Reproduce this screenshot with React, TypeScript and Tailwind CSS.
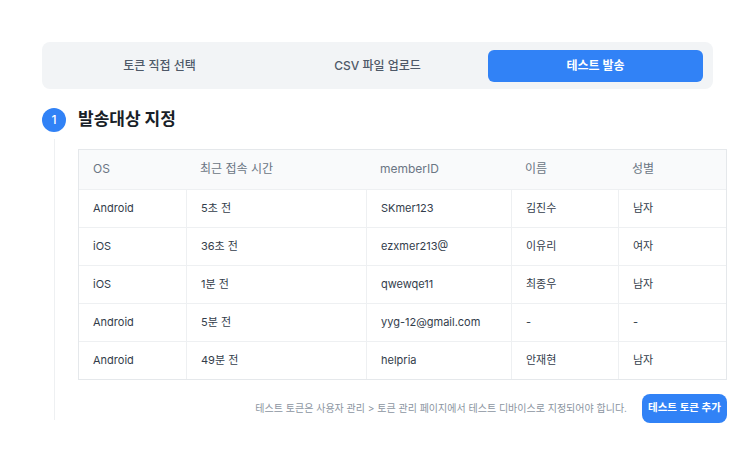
import React from 'react';

const rows = [
  ['Android', '5초 전', 'SKmer123', '김진수', '남자'],
  ['iOS', '36초 전', 'ezxmer213@', '이유리', '여자'],
  ['iOS', '1분 전', 'qwewqe11', '최종우', '남자'],
  ['Android', '5분 전', 'yyg-12@gmail.com', '-', '-'],
  ['Android', '49분 전', 'helpria', '안재현', '남자'],
];

const headers = ['OS', '최근 접속 시간', 'memberID', '이름', '성별'];
const widths = ['w-[107px] shrink-0', 'w-[180px] shrink-0', 'w-[145px] shrink-0', 'w-[107px] shrink-0', 'flex-1'];

export default function App(): React.ReactNode {
  return (
    <div
      className="h-[456px] w-[756px] bg-white pt-[42px]"
      style={{ fontFamily: 'Inter, "Noto Sans CJK KR", sans-serif' }}
    >
      <div className="ml-[42px] flex h-[47px] w-[671px] items-center gap-[3px] rounded-lg bg-[#f2f4f6] px-[10px]">
        <div className="flex h-[32px] flex-1 items-center justify-center text-[12px] font-medium text-[#4e5968]">토큰 직접 선택</div>
        <div className="flex h-[32px] flex-1 items-center justify-center text-[12px] font-medium text-[#4e5968]">CSV 파일 업로드</div>
        <div className="flex h-[32px] flex-1 items-center justify-center rounded-md bg-[#3182f6] text-[12px] font-semibold text-white">
          테스트 발송
        </div>
      </div>

      <div className="ml-[42px] mt-[18px] flex items-center gap-[12px]">
        <div className="flex h-[24px] w-[24px] items-center justify-center rounded-full bg-[#3182f6] text-[12px] font-medium text-white">
          1
        </div>
        <div className="text-[17px] font-bold text-[#191f28]">발송대상 지정</div>
      </div>

      <div className="ml-[54px] mt-[6px] flex h-[281px] border-l border-[#eef0f2]">
        <div className="ml-[23px] mt-[10px] flex w-[649px] flex-col">
          <div className="border border-[#e5e8eb]">
            <div className="flex h-[39px] items-center bg-[#f9fafb] text-[12px] text-[#6b7684]">
              {headers.map((h, i) => (
                <div key={h} className={`${widths[i]} px-[14px]`}>
                  {h}
                </div>
              ))}
            </div>
            {rows.map((r, ri) => (
              <div key={ri} className="flex h-[38px] border-t border-[#eef0f2] text-[11px] text-[#333d4b]">
                {r.map((c, i) => (
                  <div
                    key={i}
                    className={`${widths[i]} flex items-center whitespace-nowrap px-[14px] ${i > 0 ? 'border-l border-[#eef0f2]' : ''}`}
                  >
                    {c}
                  </div>
                ))}
              </div>
            ))}
          </div>
          <div className="mt-[14px] flex items-center justify-end gap-[15px]">
            <span className="text-[10px] text-[#8b95a1]">
              테스트 토큰은 사용자 관리 &gt; 토큰 관리 페이지에서 테스트 디바이스로 지정되어야 합니다.
            </span>
            <button className="h-[29px] w-[85px] rounded-lg bg-[#3182f6] text-[10.5px] font-semibold text-white">
              테스트 토큰 추가
            </button>
          </div>
        </div>
      </div>
    </div>
  );
}
